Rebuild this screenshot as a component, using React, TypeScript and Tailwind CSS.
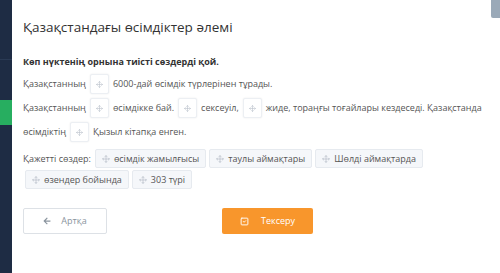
import React from "react";
import { Move, SquareCheck } from "lucide-react";
import { FaArrowLeft } from "react-icons/fa";

const Slot = () => (
  <span className="inline-flex shrink-0 items-center justify-center w-[19px] h-[20px] mx-[4px] rounded-[2px] border border-[#eceff3] bg-white shadow-[0_0_2px_rgba(0,0,0,0.08)]">
    <Move size={7} className="text-[#b8c0ca]" strokeWidth={2} />
  </span>
);

const Chip = ({ children }: { children: React.ReactNode }) => (
  <span className="inline-flex items-center gap-[4px] h-[19px] px-[6px] rounded-[2px] border border-[#e6eaef] bg-[#f5f7fa] text-[#555] text-[9px]">
    <Move size={8} className="text-[#b5bdc7]" strokeWidth={2} />
    {children}
  </span>
);

export default function App() {
  return (
    <div
      className="w-[500px] h-[273px] flex bg-white overflow-hidden relative"
      style={{ fontFamily: '"Open Sans", "Noto Sans", sans-serif' }}
    >
      <div className="w-[12px] h-full bg-[#1e2c44] flex flex-col">
        <div className="h-[60px] border-b border-[#2a3a54]" />
        <div className="h-[40px]" />
        <div className="h-[25px] bg-[#27ae60]" />
      </div>
      <div className="absolute right-0 top-0 w-[9px] h-[18px] bg-[#9aa9b8] rounded-bl-[2px]" />
      <div className="flex-1 pl-[11px] pr-[6px] text-[#555] whitespace-nowrap">
        <div className="pt-[17px] text-[13.5px] text-[#333] leading-[20px]">
          Қазақстандағы өсімдіктер әлемі
        </div>
        <div className="mt-[19px] text-[9px] font-bold text-[#333] leading-[12px]">
          Көп нүктенің орнына тиісті сөздерді қой.
        </div>
        <div className="mt-[4px] text-[9px]">
          <div className="flex items-center h-[24px]">
            <span>Қазақстанның</span>
            <Slot />
            <span>6000-дай өсімдік түрлерінен тұрады.</span>
          </div>
          <div className="flex items-center h-[24px]">
            <span>Қазақстанның</span>
            <Slot />
            <span>өсімдікке бай.</span>
            <Slot />
            <span>сексеуіл,</span>
            <Slot />
            <span>жиде, тораңғы тоғайлары кездеседі. Қазақстанда</span>
          </div>
          <div className="flex items-center h-[24px]">
            <span>өсімдіктің</span>
            <Slot />
            <span>Қызыл кітапқа енген.</span>
          </div>
          <div className="mt-[5px] flex flex-wrap items-center gap-x-[3px] gap-y-[2px]">
            <span className="mr-[1px]">Қажетті сөздер:</span>
            <Chip>өсімдік жамылғысы</Chip>
            <Chip>таулы аймақтары</Chip>
            <Chip>Шөлді аймақтарда</Chip>
            <span className="ml-[2px]">
              <Chip>өзендер бойында</Chip>
            </span>
            <Chip>303 түрі</Chip>
          </div>
        </div>
        <div className="mt-[19px] flex items-center">
          <button className="w-[84px] h-[26px] flex items-center justify-center gap-[10px] rounded-[2px] border border-[#dde1e6] bg-white text-[#8a949e] text-[9px]">
            <FaArrowLeft size={8} className="text-[#8a949e]" />
            Артқа
          </button>
          <button className="ml-[115px] w-[91px] h-[26px] flex items-center justify-center gap-[12px] rounded-[2px] bg-[#f8962c] text-white text-[9px]">
            <SquareCheck size={9} strokeWidth={2.5} />
            Тексеру
          </button>
        </div>
      </div>
    </div>
  );
}
